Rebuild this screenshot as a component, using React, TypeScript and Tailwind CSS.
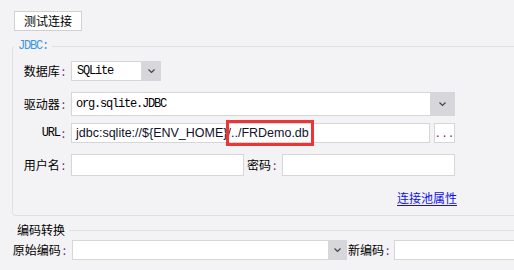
import React from "react";

function Chevron() {
  return (
    <svg width="9" height="6" viewBox="0 0 9 6">
      <path d="M1.5 1.5 L4.5 4.5 L7.5 1.5" stroke="#454545" strokeWidth="1.2" fill="none" />
    </svg>
  );
}

function Colon() {
  return <span className="ml-[2px] text-[#7a1a7a]">:</span>;
}

function Label({ text, w, mono }: { text: string; w: string; mono?: boolean }) {
  return (
    <div className={`flex shrink-0 items-center justify-end ${w}`}>
      <span className={mono ? "font-['Liberation_Mono',monospace] text-[12px] tracking-[-1.2px]" : ""}>{text}</span>
      <Colon />
    </div>
  );
}

export default function App() {
  return (
    <div className="h-[270px] w-[514px] overflow-hidden bg-[#f3f3f5] font-['Noto_Sans_CJK_SC','Noto_Sans',sans-serif] text-[12px] leading-[14px] text-black">
      <div className="pl-[14px] pt-[11px]">
        <button className="flex h-[20px] w-[68px] items-center justify-center border border-[#d0d0d0] bg-white leading-none">
          测试连接
        </button>
      </div>

      <div className="relative ml-[12px] mt-[15px] w-[520px] rounded-l-[4px] border border-r-0 border-[#e0e0e3] pb-[9px] pt-[14px]">
        <span className="absolute left-[1px] top-[-8px] bg-[#f3f3f5] px-[4px] font-['Liberation_Mono',monospace] text-[12px] leading-[14px] tracking-[-1.2px] text-[#3d96dc]">
          JDBC:
        </span>

        {/* 数据库 */}
        <div className="flex h-[20px] items-center">
          <Label text="数据库" w="w-[52px]" />
          <div className="ml-[6px] flex h-[20px] w-[90px] shrink-0">
            <div className="flex flex-1 items-center border border-r-0 border-[#d6d6d6] bg-white pl-[5px] font-['Liberation_Mono',monospace] text-[12px] tracking-[-1.2px]">
              SQLite
            </div>
            <div className="flex w-[20px] items-center justify-center bg-[#d7d7db]">
              <Chevron />
            </div>
          </div>
        </div>

        {/* 驱动器 */}
        <div className="mt-[11px] flex h-[24px] items-center">
          <Label text="驱动器" w="w-[52px]" />
          <div className="ml-[6px] flex h-[24px] w-[384px] shrink-0">
            <div className="flex flex-1 items-center border border-r-0 border-[#d6d6d6] bg-white pl-[4px] font-['Liberation_Mono',monospace] text-[12px] tracking-[-1.2px]">
              org.sqlite.JDBC
            </div>
            <div className="flex w-[25px] items-center justify-center bg-[#d7d7db]">
              <Chevron />
            </div>
          </div>
        </div>

        {/* URL */}
        <div className="mt-[7px] flex h-[20px] items-center">
          <Label text="URL" w="w-[52px]" mono />
          <div className="relative ml-[6px] flex h-[20px] w-[359px] shrink-0 items-center border border-[#d6d6d6] bg-white pl-[4px] font-['Liberation_Sans',Arial,sans-serif] text-[12.5px] text-[#10102a]">
            jdbc:sqlite://${"{"}ENV_HOME{"}"}/../FRDemo.db
            <div className="absolute left-[154px] top-[-4px] h-[26px] w-[88px] border-[3px] border-[#ee3535]" />
          </div>
          <div className="ml-[4px] flex h-[20px] w-[21px] shrink-0 items-end justify-center border border-[#d6d6d6] bg-white pb-[3px] font-['Liberation_Mono',monospace] text-[11px] leading-[10px] text-[#7a1a7a]">
            ...
          </div>
        </div>

        {/* 用户名 / 密码 */}
        <div className="mt-[11px] flex h-[22px] items-center">
          <Label text="用户名" w="w-[52px]" />
          <div className="ml-[6px] h-[22px] w-[173px] shrink-0 border border-[#d6d6d6] bg-white" />
          <div className="ml-[3px] flex w-[35px] shrink-0 items-center">
            <span>密码</span>
            <Colon />
          </div>
          <div className="h-[22px] w-[173px] shrink-0 border border-[#d6d6d6] bg-white" />
        </div>

        {/* 连接池属性 */}
        <div className="mt-[14px] flex h-[16px] w-[444px] items-center justify-end">
          <span className="text-[#1010f0] underline underline-offset-2">连接池属性</span>
        </div>
      </div>

      {/* 编码转换 */}
      <div className="relative ml-[12px] mt-[14px] border-t border-[#e0e0e3]">
        <span className="absolute left-[1px] top-[-8px] bg-[#f3f3f5] px-[4px] leading-[14px]">编码转换</span>
        <div className="ml-[-12px] mt-[9px] flex h-[20px] w-[540px] items-center">
          <Label text="原始编码" w="w-[66px]" />
          <div className="ml-[6px] flex h-[20px] w-[275px] shrink-0">
            <div className="flex-1 border border-r-0 border-[#d6d6d6] bg-white" />
            <div className="flex w-[19px] items-center justify-center bg-[#d7d7db]">
              <Chevron />
            </div>
          </div>
          <div className="ml-[1px] flex w-[46px] shrink-0 items-center">
            <span>新编码</span>
            <Colon />
          </div>
          <div className="h-[20px] w-[130px] shrink-0 border border-[#d6d6d6] bg-white" />
        </div>
      </div>
    </div>
  );
}
